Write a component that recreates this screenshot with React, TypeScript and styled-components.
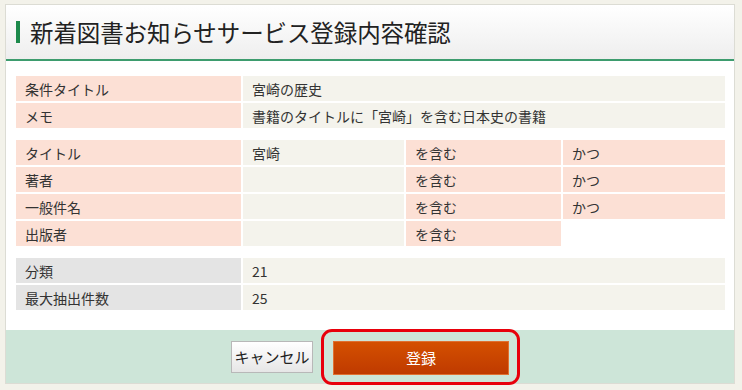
import { Fragment } from "react";
import styled, { createGlobalStyle } from "styled-components";

const GlobalStyle = createGlobalStyle`
  html, body {
    margin: 0;
    padding: 0;
    background: #f3f2ea;
    font-family: "Noto Sans CJK JP", "Noto Sans", sans-serif;
    color: #333;
  }
`;

const Page = styled.div`
  width: 742px;
  height: 390px;
  padding: 4px 7px 0 5px;
  box-sizing: border-box;
`;

const Panel = styled.div`
  border: 1px solid #dcdcd4;
  background: #fff;
`;

const Header = styled.div`
  height: 54px;
  display: flex;
  align-items: center;
  padding-left: 10px;
  background: linear-gradient(#ffffff, #eeeeee);
  border-bottom: 2px solid #3d9c6e;
`;

const Title = styled.h1`
  margin: 0;
  font-size: 23.5px;
  font-weight: 400;
  color: #222;
  display: flex;
  align-items: center;
  gap: 10px;
  letter-spacing: -0.1px;

  &::before {
    content: "";
    width: 4px;
    height: 22px;
    background: #1d8a4c;
  }
`;

const Body = styled.div`
  padding: 15px 9px 20px 10px;
  display: flex;
  flex-direction: column;
  gap: 12px;
`;

const Table = styled.div<{ cols: string }>`
  display: grid;
  grid-template-columns: ${({ cols }) => cols};
  column-gap: 2px;
  row-gap: 2px;
  font-size: 14px;
`;

const Cell = styled.div<{ kind: "label" | "value" | "grey" | "none" }>`
  height: 25px;
  display: flex;
  align-items: center;
  padding-left: 9px;
  white-space: nowrap;
  background: ${({ kind }) =>
    kind === "label"
      ? "#fce0d5"
      : kind === "value"
      ? "#f4f3ec"
      : kind === "grey"
      ? "#e4e4e4"
      : "transparent"};
`;

const Footer = styled.div`
  background: #cde5d8;
  height: 53px;
  display: flex;
  align-items: center;
  justify-content: center;
  gap: 20px;
`;

const CancelButton = styled.button`
  width: 82px;
  height: 32px;
  font-family: inherit;
  font-size: 15px;
  color: #222;
  border: 1px solid #b8b8b8;
  background: linear-gradient(#ffffff, #e6e6e6);
  padding: 0;
`;

const Highlight = styled.div`
  position: relative;
  display: flex;
  margin-top: 2px;

  &::after {
    content: "";
    position: absolute;
    left: -12px;
    right: -11px;
    top: -12px;
    bottom: -10px;
    border: 3px solid #e8000b;
    border-radius: 11px;
    pointer-events: none;
  }
`;

const SubmitButton = styled.button`
  width: 176px;
  height: 34px;
  font-family: inherit;
  font-size: 15px;
  color: #fff;
  border: 1px solid #e07030;
  background: linear-gradient(#d45000, #bf3a00);
  padding: 0;
`;

const conditions = [
  { label: "タイトル", value: "宮崎", op: "を含む", join: "かつ" },
  { label: "著者", value: "", op: "を含む", join: "かつ" },
  { label: "一般件名", value: "", op: "を含む", join: "かつ" },
  { label: "出版者", value: "", op: "を含む", join: "" },
];

export default function App() {
  return (
    <>
      <GlobalStyle />
      <Page>
        <Panel>
          <Header>
            <Title>新着図書お知らせサービス登録内容確認</Title>
          </Header>
          <Body>
            <Table cols="225px 1fr">
              <Cell kind="label">条件タイトル</Cell>
              <Cell kind="value">宮崎の歴史</Cell>
              <Cell kind="label">メモ</Cell>
              <Cell kind="value">書籍のタイトルに「宮崎」を含む日本史の書籍</Cell>
            </Table>
            <Table cols="225px 161px 155px 1fr">
              {conditions.map((c) => (
                <Fragment key={c.label}>
                  <Cell kind="label">{c.label}</Cell>
                  <Cell kind="value">{c.value}</Cell>
                  <Cell kind="label">{c.op}</Cell>
                  <Cell kind={c.join ? "label" : "none"}>{c.join}</Cell>
                </Fragment>
              ))}
            </Table>
            <Table cols="225px 1fr">
              <Cell kind="grey">分類</Cell>
              <Cell kind="value">21</Cell>
              <Cell kind="grey">最大抽出件数</Cell>
              <Cell kind="value">25</Cell>
            </Table>
          </Body>
          <Footer>
            <CancelButton>キャンセル</CancelButton>
            <Highlight>
              <SubmitButton>登録</SubmitButton>
            </Highlight>
          </Footer>
        </Panel>
      </Page>
    </>
  );
}
